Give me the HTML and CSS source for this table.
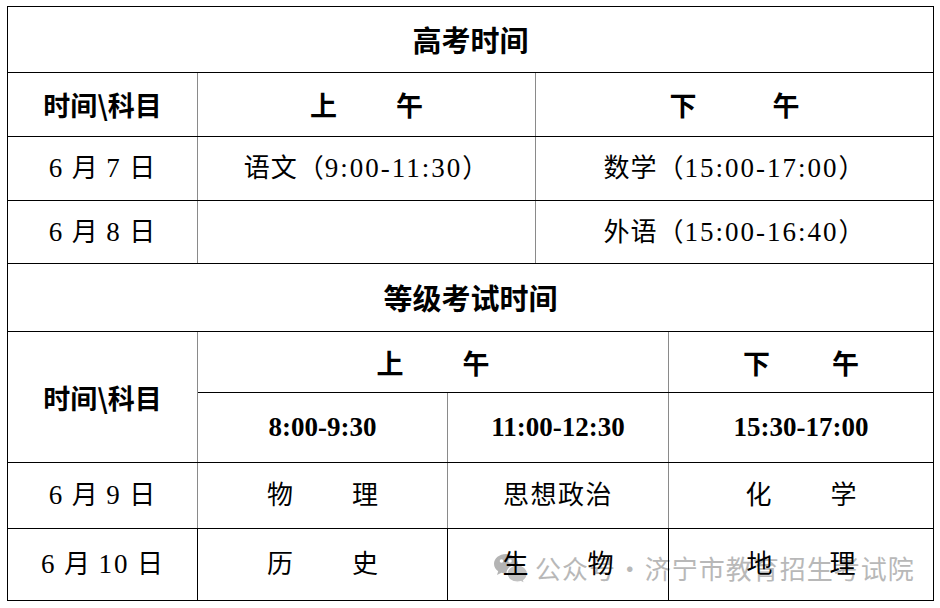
FILE: index.html
```html
<!DOCTYPE html>
<html lang="zh-CN">
<head>
<meta charset="utf-8">
<title>高考时间</title>
<link rel="stylesheet" href="styles.css">
</head>
<body>
<div class="page">
  <table class="sched">
    <colgroup>
      <col class="c1"><col class="c2"><col class="c3"><col class="c4"><col class="c5">
    </colgroup>
    <tbody>
      <tr class="r1"><th colspan="5" class="title">高考时间</th></tr>
      <tr class="r2">
        <th class="head">时间\科目</th>
        <th colspan="2" class="head"><span class="spread">上午</span></th>
        <th colspan="2" class="head"><span class="spread wide">下午</span></th>
      </tr>
      <tr class="r3">
        <td><span class="num">6</span> 月 <span class="num">7</span> 日</td>
        <td colspan="2">语文（<span class="num">9:00-11:30</span>）</td>
        <td colspan="2">数学（<span class="num">15:00-17:00</span>）</td>
      </tr>
      <tr class="r4">
        <td><span class="num">6</span> 月 <span class="num">8</span> 日</td>
        <td colspan="2"></td>
        <td colspan="2">外语（<span class="num">15:00-16:40</span>）</td>
      </tr>
      <tr class="r5"><th colspan="5" class="title">等级考试时间</th></tr>
      <tr class="r6">
        <th rowspan="2" class="head">时间\科目</th>
        <th colspan="3" class="head"><span class="spread">上午</span></th>
        <th class="head"><span class="spread mid">下午</span></th>
      </tr>
      <tr class="r7">
        <th class="time">8:00-9:30</th>
        <th colspan="2" class="time">11:00-12:30</th>
        <th class="time">15:30-17:00</th>
      </tr>
      <tr class="r8">
        <td><span class="num">6</span> 月 <span class="num">9</span> 日</td>
        <td><span class="spread">物理</span></td>
        <td colspan="2" class="tight">思想政治</td>
        <td><span class="spread">化学</span></td>
      </tr>
      <tr class="r9 last">
        <td><span class="num">6</span> 月 <span class="num">10</span> 日</td>
        <td><span class="spread">历史</span></td>
        <td colspan="2"><span class="spread">生物</span></td>
        <td><span class="spread narrow">地理</span></td>
      </tr>
    </tbody>
  </table>
  <div class="watermark">
    <svg class="wx" viewBox="0 0 38 32" width="38" height="32" aria-hidden="true">
      <path d="M14 2C7.4 2 2 6.4 2 11.8c0 3 1.6 5.6 4.2 7.4L5 23l4.4-2.3c1.4.4 3 .6 4.6.6 6.6 0 12-4.4 12-9.6S20.6 2 14 2z" fill="#b4b4b4"/>
      <circle cx="9.5" cy="9" r="1.8" fill="#fff"/>
      <circle cx="18" cy="9" r="1.8" fill="#fff"/>
      <path d="M25.5 13c-6 0-10.5 3.8-10.5 8.6s4.5 8.6 10.5 8.6c1.2 0 2.4-.2 3.5-.5l3.6 1.9-1-3.2c2.3-1.6 3.8-4 3.8-6.8 0-4.8-4.2-8.6-9.9-8.6z" fill="#c2c2c2" stroke="#fff" stroke-width="1.2"/>
    </svg>
    <span class="wm-text">公众号 · 济宁市教育招生考试院</span>
  </div>
</div>
</body>
</html>
```

FILE: styles.css
```css
html, body {
  margin: 0;
  padding: 0;
  background: #fff;
}

.page {
  position: relative;
  width: 940px;
  height: 608px;
  padding: 6px 0 0 7px;
  box-sizing: border-box;
}

.sched {
  position: relative;
  z-index: 1;
  border-collapse: collapse;
  table-layout: fixed;
  width: 927px;
  color: #000;
  font-family: "Liberation Serif", "Noto Sans CJK SC", serif;
  font-size: 26px;
}

.c1 { width: 190px; }
.c2 { width: 250px; }
.c3 { width: 88px; }
.c4 { width: 133px; }
.c5 { width: 265px; }

.sched th,
.sched td {
  padding: 0;
  text-align: center;
  vertical-align: middle;
  border-top: 1px solid #000;
  border-bottom: 1px solid #000;
  border-left: 1px solid #8a8a8a;
  border-right: 1px solid #8a8a8a;
  white-space: nowrap;
  line-height: 1;
}

.sched tr > :first-child { border-left: 1px solid #000; }
.sched tr > :last-child { border-right: 1px solid #000; }
.sched .last td { border-left-color: #000; border-right-color: #000; }

.r1 { height: 66px; }
.r2 { height: 64px; }
.r3 { height: 64px; }
.r4 { height: 63px; }
.r5 { height: 68px; }
.r6 { height: 61px; }
.r7 { height: 70px; }
.r8 { height: 66px; }
.r9 { height: 72px; }

.title {
  font-family: "Noto Sans CJK SC", sans-serif;
  font-weight: 700;
  font-size: 29px;
}

.head {
  font-family: "Noto Sans CJK SC", sans-serif;
  font-weight: 700;
  font-size: 27px;
}

.time {
  font-family: "Liberation Serif", serif;
  font-weight: 700;
  font-size: 27px;
}

.sched td {
  font-weight: 400;
  letter-spacing: 1px;
}

.num {
  font-family: "Liberation Serif", serif;
  font-size: 27px;
  letter-spacing: 2px;
}

.spread {
  display: inline-block;
  letter-spacing: 59px;
  margin-right: -59px;
}
.spread.wide {
  letter-spacing: 76px;
  margin-right: -76px;
}
.spread.mid {
  letter-spacing: 62px;
  margin-right: -62px;
}
.spread.narrow {
  letter-spacing: 57px;
  margin-right: -57px;
}

.sched td.tight {
  letter-spacing: 1.5px;
}

.watermark {
  position: absolute;
  z-index: 0;
  left: 492px;
  top: 552px;
  display: flex;
  align-items: center;
  gap: 5px;
  pointer-events: none;
}

.wx {
  display: block;
}

.wm-text {
  font-family: "Noto Sans CJK SC", sans-serif;
  font-size: 26px;
  line-height: 32px;
  color: #b8b8b8;
  letter-spacing: 1px;
  word-spacing: -6px;
}
```
